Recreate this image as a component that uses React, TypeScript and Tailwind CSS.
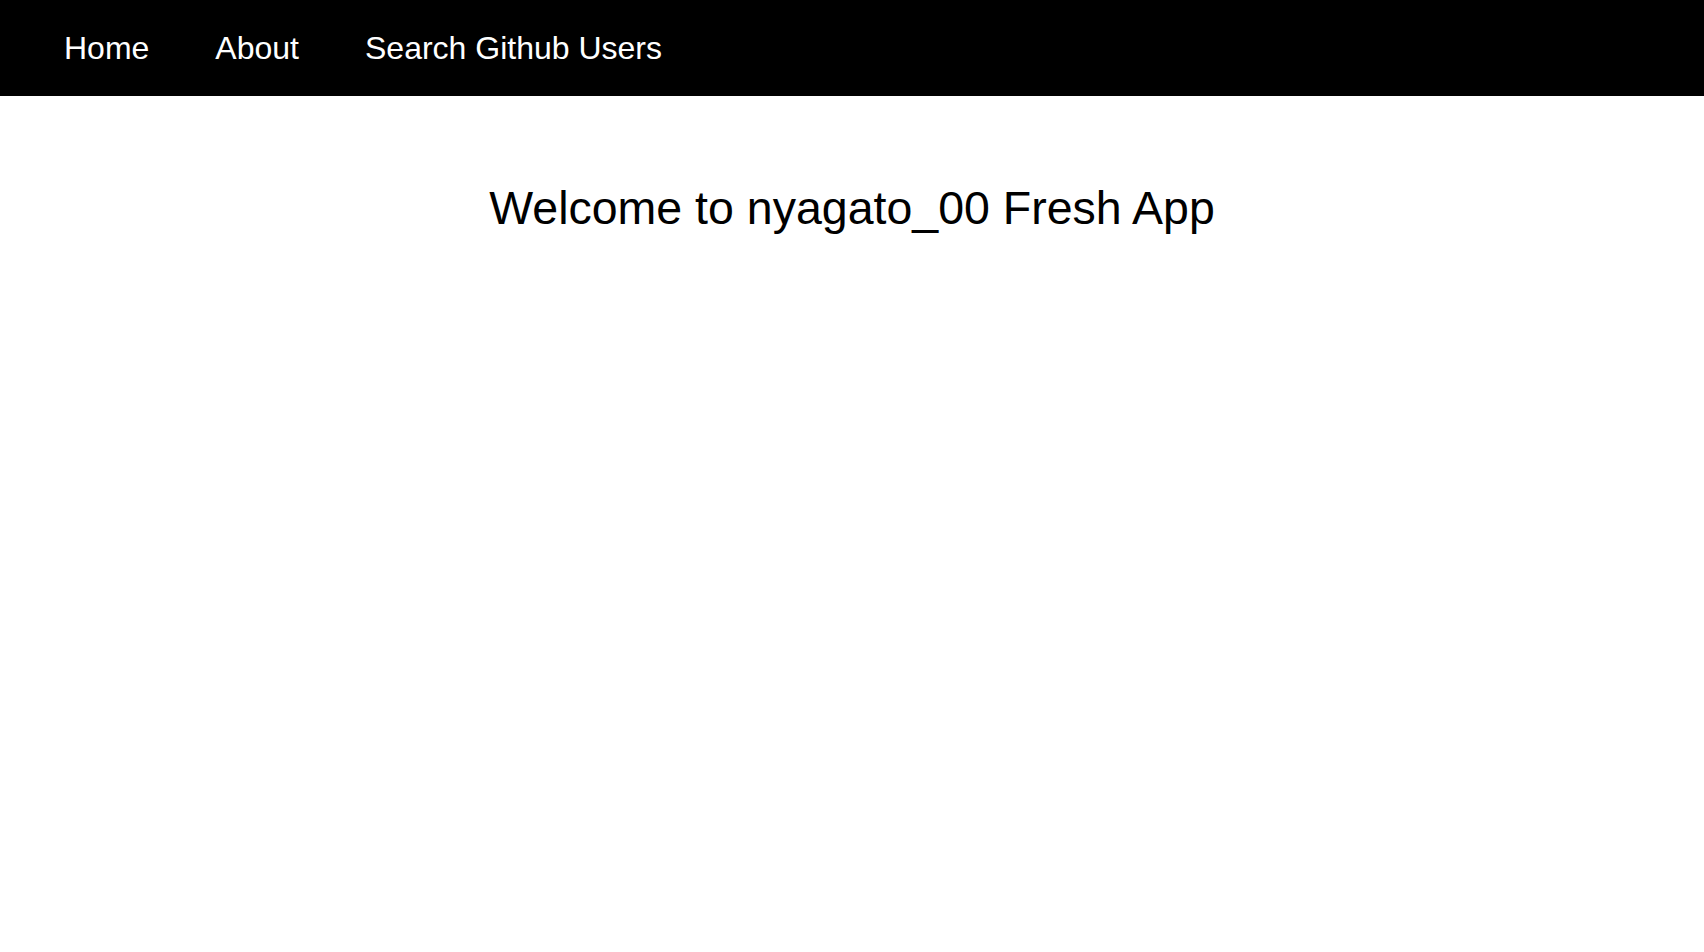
export default function App() {
  return (
    <div className="min-h-screen bg-white font-['Liberation_Sans',Arial,sans-serif] text-black">
      <nav className="flex h-[96px] items-center gap-[66px] bg-black px-16">
        <a href="/" className="text-[32px] leading-[32px] text-white">
          Home
        </a>
        <a href="/about" className="text-[32px] leading-[32px] text-white">
          About
        </a>
        <a href="/search" className="text-[32px] leading-[32px] text-white">
          Search Github Users
        </a>
      </nav>
      <h1 className="mt-[78px] text-center text-[46.5px]">
        Welcome to nyagato_00 Fresh App
      </h1>
    </div>
  );
}
